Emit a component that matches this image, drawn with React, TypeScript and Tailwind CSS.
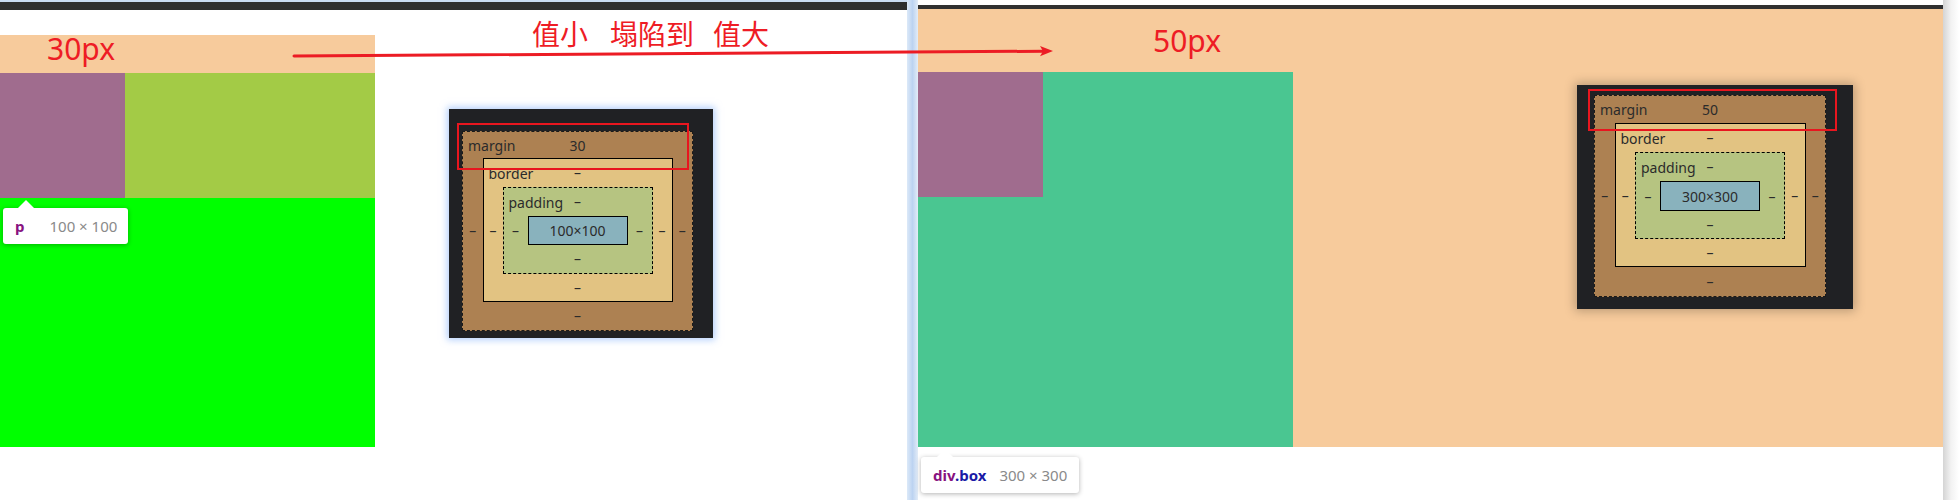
import React from "react";

type BoxProps = {
  marginVal: string;
  content: string;
  mw: string;
  mh: string;
  bw: string;
  bh: string;
  ch: string;
  mRow: string;
};

function Dash() {
  return <span className="leading-none">–</span>;
}

function BoxModel({ marginVal, content, mw, mh, bw, bh, ch, mRow }: BoxProps) {
  return (
    <div
      className={`flex flex-col border border-dashed border-[#1a1a1a] bg-[#ad8152] ${mw} ${mh}`}
    >
      <div className={`grid grid-cols-[1fr_auto_1fr] items-center ${mRow}`}>
        <span className="pl-[5px]">margin</span>
        <span>{marginVal}</span>
        <span />
      </div>
      <div className="grid grid-cols-[1fr_auto_1fr] items-center">
        <span className="text-center">
          <Dash />
        </span>
        <div className={`flex flex-col border border-black bg-[#e2c382] ${bw} ${bh}`}>
          <div className="grid h-[28px] grid-cols-[1fr_auto_1fr] items-center">
            <span className="pl-[5px]">border</span>
            <Dash />
            <span />
          </div>
          <div className="grid grid-cols-[1fr_auto_1fr] items-center">
            <span className="text-center">
              <Dash />
            </span>
            <div className="flex h-[87px] w-[150px] flex-col border border-dashed border-black bg-[#b6c481]">
              <div className="grid h-[28px] grid-cols-[1fr_auto_1fr] items-center">
                <span className="pl-[5px]">padding</span>
                <Dash />
                <span />
              </div>
              <div className="grid grid-cols-[1fr_auto_1fr] items-center">
                <span className="text-center">
                  <Dash />
                </span>
                <div
                  className={`flex w-[100px] items-center justify-center border border-black bg-[#89b2bd] ${ch}`}
                >
                  {content}
                </div>
                <span className="text-center">
                  <Dash />
                </span>
              </div>
              <div className="flex flex-1 items-center justify-center">
                <Dash />
              </div>
            </div>
            <span className="text-center">
              <Dash />
            </span>
          </div>
          <div className="flex flex-1 items-center justify-center">
            <Dash />
          </div>
        </div>
        <span className="text-center">
          <Dash />
        </span>
      </div>
      <div className="flex flex-1 items-center justify-center">
        <Dash />
      </div>
    </div>
  );
}

export default function App() {
  const label = { fontFamily: '"Noto Sans", "Open Sans", sans-serif' };
  const cjk = { fontFamily: '"Noto Sans CJK SC", "Noto Sans", sans-serif' };
  return (
    <div className="relative h-[500px] w-[1959px] overflow-hidden bg-white">
      <div className="flex h-full">
        {/* left window */}
        <div className="flex w-[907px] flex-col">
          <div className="h-[2px] bg-[#c9dbf1]" />
          <div className="h-[8px] bg-[#2e2e2e]" />
          <div className="h-[25px]" />
          <div className="flex w-[375px] flex-col">
            <div className="h-[38px] bg-[#f7cb9c]" />
            <div className="flex h-[125px]">
              <div className="w-[125px] bg-[#a06c8e]" />
              <div className="flex-1 bg-[#a3cb46]" />
            </div>
            <div className="h-[249px] bg-[#00ff00]" />
          </div>
        </div>
        {/* separator */}
        <div className="w-[11px] bg-gradient-to-r from-[#dce9f8] via-[#bcd3f1] to-[#e3ecf7]" />
        {/* right window */}
        <div className="flex w-[1025px] flex-col">
          <div className="h-[5px] bg-white" />
          <div className="h-[4px] bg-[#303030]" />
          <div className="flex h-[438px] flex-col bg-[#f7cb9c] pt-[63px]">
            <div className="h-[375px] w-[375px] bg-[#4ac691]">
              <div className="h-[125px] w-[125px] bg-[#a06c8e]" />
            </div>
          </div>
        </div>
        <div className="w-[16px] bg-gradient-to-r from-[#d4d4d4] via-[#f2f2f2] to-white" />
      </div>

      {/* left devtools box model */}
      <div
        className="absolute left-[449px] top-[109px] h-[229px] w-[264px] bg-[#202124] pl-[13px] pt-[22px] text-[14px] text-[#2b2b2b] shadow-[0_0_7px_2px_rgba(120,170,250,0.55)]"
        style={label}
      >
        <BoxModel
          marginVal="30"
          content="100×100"
          mw="w-[231px]"
          mh="h-[200px]"
          bw="w-[190px]"
          bh="h-[144px]"
          ch="h-[29px]"
          mRow="h-[26px]"
        />
      </div>

      {/* right devtools box model */}
      <div
        className="absolute left-[1577px] top-[85px] h-[224px] w-[276px] bg-[#202124] pl-[17px] pt-[10px] text-[14px] text-[#2b2b2b] shadow-[0_0_10px_2px_rgba(0,0,0,0.25)]"
        style={label}
      >
        <BoxModel
          marginVal="50"
          content="300×300"
          mw="w-[232px]"
          mh="h-[202px]"
          bw="w-[191px]"
          bh="h-[144px]"
          ch="h-[30px]"
          mRow="h-[27px]"
        />
      </div>

      {/* left tooltip */}
      <div
        className="absolute left-[3px] top-[208px] flex h-[36px] w-[125px] items-center rounded-[3px] bg-white pl-[12px] text-[15px] shadow-[0_1px_5px_rgba(0,0,0,0.3)]"
        style={label}
      >
        <span className="font-bold text-[#881280]">p</span>
        <span className="ml-[25px] text-[#8a8a8a]">100 × 100</span>
        <div className="absolute left-[14px] top-[-8px] h-0 w-0 border-x-[9px] border-b-[9px] border-x-transparent border-b-white" />
      </div>

      {/* right tooltip */}
      <div
        className="absolute left-[921px] top-[457px] flex h-[36px] w-[158px] items-center rounded-[3px] bg-white pl-[12px] text-[15px] shadow-[0_1px_5px_rgba(0,0,0,0.3)]"
        style={label}
      >
        <span className="font-bold">
          <span className="text-[#881280]">div</span>
          <span className="text-[#1a1aa6]">.box</span>
        </span>
        <span className="ml-[13px] text-[#8a8a8a]">300 × 300</span>
        <div className="absolute left-[15px] top-[-8px] h-0 w-0 border-x-[9px] border-b-[9px] border-x-transparent border-b-white" />
      </div>

      {/* annotations */}
      <div
        className="absolute left-[47px] top-[29px] text-[30px] leading-[40px] text-[#ee1c25]"
        style={label}
      >
        30px
      </div>
      <div
        className="absolute left-[1153px] top-[21px] text-[30px] leading-[40px] text-[#ee1c25]"
        style={label}
      >
        50px
      </div>
      <div
        className="absolute left-[532px] top-[13px] flex text-[28px] leading-[40px] text-[#ee1c25]"
        style={cjk}
      >
        <span>值小</span>
        <span className="ml-[22px]">塌陷到</span>
        <span className="ml-[19px]">值大</span>
      </div>

      <div className="absolute left-[457px] top-[123px] h-[47px] w-[232px] border-2 border-[#e8161f]" />
      <div className="absolute left-[1588px] top-[89px] h-[42px] w-[249px] border-2 border-[#e8161f]" />

      <svg
        className="pointer-events-none absolute left-0 top-0"
        width="1959"
        height="500"
        viewBox="0 0 1959 500"
      >
        <line
          x1="294"
          y1="56"
          x2="1044"
          y2="51.2"
          stroke="#ec1c24"
          strokeWidth="3"
          strokeLinecap="round"
        />
        <polygon points="1053,51 1040,46 1043,51.2 1040,56.2" fill="#ec1c24" />
      </svg>
    </div>
  );
}
